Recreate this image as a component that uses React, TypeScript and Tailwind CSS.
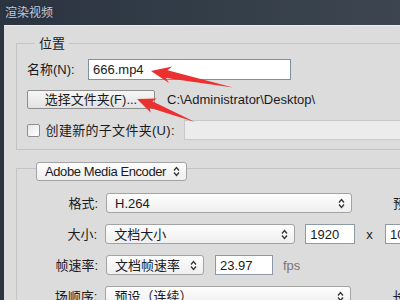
import React from 'react';

function Arrows() {
  return (
    <svg width="7" height="11" viewBox="0 0 7 11" className="shrink-0">
      <path d="M1 4.5 L3.5 1.5 L6 4.5" fill="none" stroke="#333" strokeWidth="1.3" />
      <path d="M1 6.5 L3.5 9.5 L6 6.5" fill="none" stroke="#333" strokeWidth="1.3" />
    </svg>
  );
}

function Select({ className, text }: { className: string; text: string }) {
  return (
    <div
      className={`h-[20px] shrink-0 border border-[#a3a3a3] rounded-[3px] bg-gradient-to-b from-[#fdfdfd] to-[#efefef] flex items-center justify-between pl-[8px] pr-[6px] ${className}`}
    >
      <span className="whitespace-nowrap">{text}</span>
      <Arrows />
    </div>
  );
}

function Field({ className, text }: { className: string; text: string }) {
  return (
    <div
      className={`h-[20px] shrink-0 bg-white border border-[#8c9aa8] flex items-center pl-[4px] whitespace-nowrap ${className}`}
    >
      {text}
    </div>
  );
}

function Row({ label, children }: { label: string; children: React.ReactNode }) {
  return (
    <div className="flex items-center h-[20px]">
      <div className="w-[81px] mr-[8px] text-right whitespace-nowrap">{label}</div>
      {children}
    </div>
  );
}

export default function App() {
  return (
    <div className="relative w-[400px] h-[300px] overflow-hidden bg-[#2c3540] flex flex-col font-['Liberation_Sans','Noto_Sans_CJK_SC',sans-serif] text-[13px] leading-none text-[#1a1a22]">
      {/* title bar */}
      <div className="h-[25px] shrink-0 flex items-center pl-[5px] bg-gradient-to-r from-[#2b3440] via-[#333d48] to-[#3d4650]">
        <span className="text-[12px] text-[#c3ccd6] [text-shadow:0_0_3px_#1a2a4a]">渲染视频</span>
      </div>

      <div className="flex-1 ml-[4px] bg-[#dcdcdc] border-t border-[#ececec] flex flex-col">
        {/* 位置 */}
        <div className="relative mt-[17px] ml-[12px] w-[420px] h-[107px] shrink-0 border border-[#c4c4c4] pl-[10px] pt-[15px]">
          <span className="absolute -top-[7px] left-[18px] px-[4px] bg-[#dcdcdc]">位置</span>

          <div className="flex items-center h-[21px]">
            <div className="w-[61px] whitespace-nowrap">名称(N):</div>
            <div className="w-[203px] h-[21px] bg-white border border-[#7d8fa2] flex items-center pl-[4px]">666.mp4</div>
          </div>

          <div className="mt-[10px] flex items-center h-[19px]">
            <div className="w-[128px] h-[19px] border border-[#8e8e8e] rounded-[2px] bg-gradient-to-b from-[#f6f6f6] to-[#e2e2e2] flex items-center justify-center">
              选择文件夹(F)...
            </div>
            <span className="ml-[12px] whitespace-nowrap">C:\Administrator\Desktop\</span>
          </div>

          <div className="mt-[11px] flex items-center h-[20px]">
            <div className="w-[13px] h-[13px] border border-[#8f8f8f] rounded-[2px] bg-gradient-to-br from-[#e8e8e8] to-white" />
            <div className="ml-[6px] w-[144px] whitespace-nowrap tracking-[0.3px]">创建新的子文件夹(U):</div>
            <div className="w-[260px] h-[20px] bg-[#ececec] border border-[#c9c9c9]" />
          </div>
        </div>

        {/* Adobe Media Encoder */}
        <div className="mt-[18px] ml-[12px] w-[420px] h-[200px] shrink-0 border border-[#c4c4c4] flex flex-col">
          <div className="relative z-10 -mt-[7px] ml-[19px] w-[151px] h-[19px] border border-[#a3a3a3] rounded-[3px] bg-gradient-to-b from-[#fdfdfd] to-[#efefef] flex items-center justify-between pl-[8px] pr-[6px]">
            <span className="whitespace-nowrap text-[13px] tracking-[-0.4px]">Adobe Media Encoder</span>
            <Arrows />
          </div>

          <div className="mt-[12px] flex flex-col gap-[11px]">
            <Row label="格式:">
              <Select className="w-[246px]" text="H.264" />
              <span className="ml-[41px] whitespace-nowrap">预设:</span>
            </Row>
            <Row label="大小:">
              <Select className="w-[190px]" text="文档大小" />
              <Field className="ml-[10px] w-[50px]" text="1920" />
              <span className="ml-[11px] w-[19px]">x</span>
              <Field className="w-[50px]" text="1080" />
            </Row>
            <Row label="帧速率:">
              <Select className="w-[98px]" text="文档帧速率" />
              <Field className="ml-[11px] w-[58px]" text="23.97" />
              <span className="ml-[10px] text-[#777]">fps</span>
            </Row>
            <Row label="场顺序:">
              <Select className="w-[246px]" text="预设（连续）" />
              <span className="ml-[41px] whitespace-nowrap">长宽比:</span>
            </Row>
          </div>
        </div>
      </div>

      {/* red annotation arrows */}
      <svg className="absolute inset-0 pointer-events-none" width="400" height="300" viewBox="0 0 400 300">
        <polygon points="151,71 172.2,66.6 167.5,70.2 233,87.5 165.9,78 169,83" fill="#ec2f2f" />
        <polygon points="137,99 156.8,98.6 152.3,101.2 195,122 149.7,107.8 150.8,112.8" fill="#ec2f2f" />
      </svg>
    </div>
  );
}
